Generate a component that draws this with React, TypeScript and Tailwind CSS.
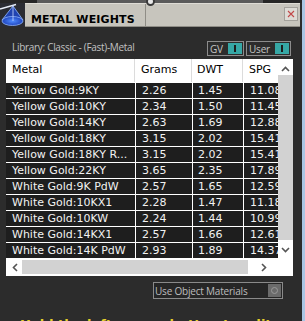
import React from 'react';

const rows: [string, string, string, string][] = [
  ['Yellow Gold:9KY', '2.26', '1.45', '11.08'],
  ['Yellow Gold:10KY', '2.34', '1.50', '11.45'],
  ['Yellow Gold:14KY', '2.63', '1.69', '12.88'],
  ['Yellow Gold:18KY', '3.15', '2.02', '15.41'],
  ['Yellow Gold:18KY R...', '3.15', '2.02', '15.41'],
  ['Yellow Gold:22KY', '3.65', '2.35', '17.89'],
  ['White Gold:9K PdW', '2.57', '1.65', '12.59'],
  ['White Gold:10KX1', '2.28', '1.47', '11.18'],
  ['White Gold:10KW', '2.24', '1.44', '10.99'],
  ['White Gold:14KX1', '2.57', '1.66', '12.61'],
  ['White Gold:14K PdW', '2.93', '1.89', '14.37'],
];

const Chevron = ({ dir }: { dir: 'up' | 'down' | 'left' | 'right' }) => {
  const d = {
    up: 'M2 7 L5.5 3.5 L9 7',
    down: 'M2 4 L5.5 7.5 L9 4',
    left: 'M7 2 L3.5 5.5 L7 9',
    right: 'M4 2 L7.5 5.5 L4 9',
  }[dir];
  return (
    <svg width="11" height="11" viewBox="0 0 11 11">
      <path d={d} fill="none" stroke="#555" strokeWidth="1.6" />
    </svg>
  );
};

const Toggle = ({ label, width }: { label: string; width: string }) => (
  <div className={`flex items-center justify-between h-[15px] border border-[#8c8c8c] pl-[2px] pr-[1px] ${width}`}>
    <span className="text-[10px] leading-none text-[#c4c4c4] tracking-[-0.2px]">{label}</span>
    <div className="w-[14px] h-[11px] bg-[#36a7a5] flex items-center justify-center">
      <div className="w-[2px] h-[7px] bg-[#1d1d1d]" />
    </div>
  </div>
);

const ConeIcon = () => (
  <svg width="25" height="24" viewBox="0 0 25 24">
    <rect width="25" height="24" fill="#2a2c33" />
    <defs>
      <radialGradient id="base" cx="0.5" cy="0.5" r="0.6">
        <stop offset="0" stopColor="#4f8cff" />
        <stop offset="1" stopColor="#1535b0" />
      </radialGradient>
    </defs>
    <path d="M13 3 L2 17 L23 17 Z" fill="#1f48c8" opacity="0.85" />
    <ellipse cx="12.5" cy="18" rx="10.5" ry="4.5" fill="url(#base)" stroke="#8fb6ff" strokeWidth="0.8" />
    <path d="M13 3 L2 17 M13 3 L23 17" stroke="#8fb6ff" strokeWidth="0.8" fill="none" />
    <path d="M0 6 L16 1.5" stroke="#e8eef8" strokeWidth="1.4" />
    <path d="M13 2 L13 18" stroke="#c8d8ff" strokeWidth="0.8" />
  </svg>
);

export default function App() {
  return (
    <div className="w-[305px] h-[321px] flex overflow-hidden bg-[#2c2c2c] font-['Open_Sans',sans-serif]">
      <div className="w-[302px] flex flex-col">
        {/* top strip */}
        <div className="h-[10px] bg-[#262626] relative">
          <div className="ml-[37px] w-[226px] h-[3px] bg-[#5a5a5a]" />
          <div className="absolute left-[146px] top-[-3px] w-[9px] h-[9px] rounded-full bg-[#e8e8e8] border-2 border-[#3a3a3a]" />
        </div>

        {/* title */}
        <div className="h-[24px] flex">
          <ConeIcon />
          <div className="flex-1 flex bg-[#c7c5bd] border-t border-[#dedcd5] border-b border-b-[#8f8d86] mr-[2px]">
            <div className="w-[121px] border-r border-[#8f8d86] pl-[6px] pt-[1px]">
              <span className="font-['DejaVu_Sans',sans-serif] font-bold text-[11px] leading-[13px] text-black tracking-[0.15px]">
                METAL WEIGHTS
              </span>
            </div>
            <div className="flex-1 flex justify-end pt-[3px] pr-[2px]">
              <div className="w-[14px] h-[14px] bg-[#dddbd5] border border-[#a3a19b] flex items-center justify-center">
                <svg width="10" height="10" viewBox="0 0 10 10">
                  <path d="M2 2 L8 8 M8 2 L2 8" stroke="#c24848" strokeWidth="1.1" />
                </svg>
              </div>
            </div>
          </div>
        </div>

        {/* body */}
        <div className="flex-1 flex flex-col px-[6px]">
          <div className="flex items-start justify-between pl-[6px] pr-[5px] mt-[13px] h-[19px]">
            <span className="text-[10px] leading-[12px] mt-[1px] text-[#c2c2c2] tracking-[-0.3px]">
              Library: Classic - (Fast)-Metal
            </span>
            <div className="flex gap-[2px] mt-[1px]">
              <Toggle label="GV" width="w-[37px]" />
              <Toggle label="User" width="w-[45px]" />
            </div>
          </div>

          {/* table */}
          <div className="w-[287px] h-[217px] bg-white flex flex-col font-['DejaVu_Sans',sans-serif] text-[11px]">
            <div className="flex h-[200px]">
              <div className="w-[272px] flex flex-col gap-px">
                <div className="h-[23px] grid grid-cols-[129px_57px_51px_35px] items-center text-black">
                  <div className="pl-[6px] h-full flex items-center border-r border-[#dcdcdc]">Metal</div>
                  <div className="pl-[6px] h-full flex items-center border-r border-[#dcdcdc] overflow-hidden">Grams</div>
                  <div className="pl-[5px] h-full flex items-center border-r border-[#dcdcdc]">DWT</div>
                  <div className="pl-[6px] h-full flex items-center overflow-hidden whitespace-nowrap">SPG</div>
                </div>
                {rows.map((r) => (
                  <div key={r[0]} className="h-[15px] grid grid-cols-[129px_56px_50px_34px] gap-x-px text-[#f2f2f2] leading-[15px]">
                    <div className="bg-[#1e1e1e] pl-[6px] whitespace-nowrap overflow-hidden">{r[0]}</div>
                    <div className="bg-[#1e1e1e] pl-[6px] whitespace-nowrap overflow-hidden">{r[1]}</div>
                    <div className="bg-[#1e1e1e] pl-[5px] whitespace-nowrap overflow-hidden">{r[2]}</div>
                    <div className="bg-[#1e1e1e] pl-[6px] whitespace-nowrap overflow-hidden">{r[3]}</div>
                  </div>
                ))}
              </div>
              <div className="w-[15px] flex flex-col items-center">
                <div className="h-[16px] flex items-end"><Chevron dir="up" /></div>
                <div className="w-[15px] h-[165px] bg-[#d2d2d2]" />
                <div className="flex-1 flex items-center"><Chevron dir="down" /></div>
              </div>
            </div>
            <div className="h-[16px] flex items-center">
              <div className="w-[272px] flex items-center h-full">
                <div className="w-[16px] flex justify-center pl-[2px]"><Chevron dir="left" /></div>
                <div className="w-[226px] h-[14px] bg-[#d2d2d2]" />
                <div className="flex-1 flex justify-center"><Chevron dir="right" /></div>
              </div>
            </div>
          </div>

          {/* use object materials */}
          <div className="flex justify-end mr-[13px] mt-[6px]">
            <div className="w-[130px] h-[17px] border border-[#8a8a8a] bg-[#262626] flex items-center justify-between pl-[1px] pr-[1px]">
              <span className="text-[10px] leading-none text-[#bdbdbd] tracking-[-0.2px]">Use Object Materials</span>
              <div className="w-[13px] h-[13px] bg-[#6b6b6b] flex items-center justify-center">
                <div className="w-[7px] h-[7px] rounded-full border border-[#9a9a9a]" />
              </div>
            </div>
          </div>

          <div className="mt-[19px] pl-[14px] text-[13px] leading-[14px] font-bold text-[#e6cf2c] whitespace-nowrap font-['DejaVu_Sans',sans-serif]">
            Hold the left mouse button to edit a metal
          </div>
        </div>
      </div>
      <div className="w-[3px] bg-[#a9c6e4]" />
    </div>
  );
}
